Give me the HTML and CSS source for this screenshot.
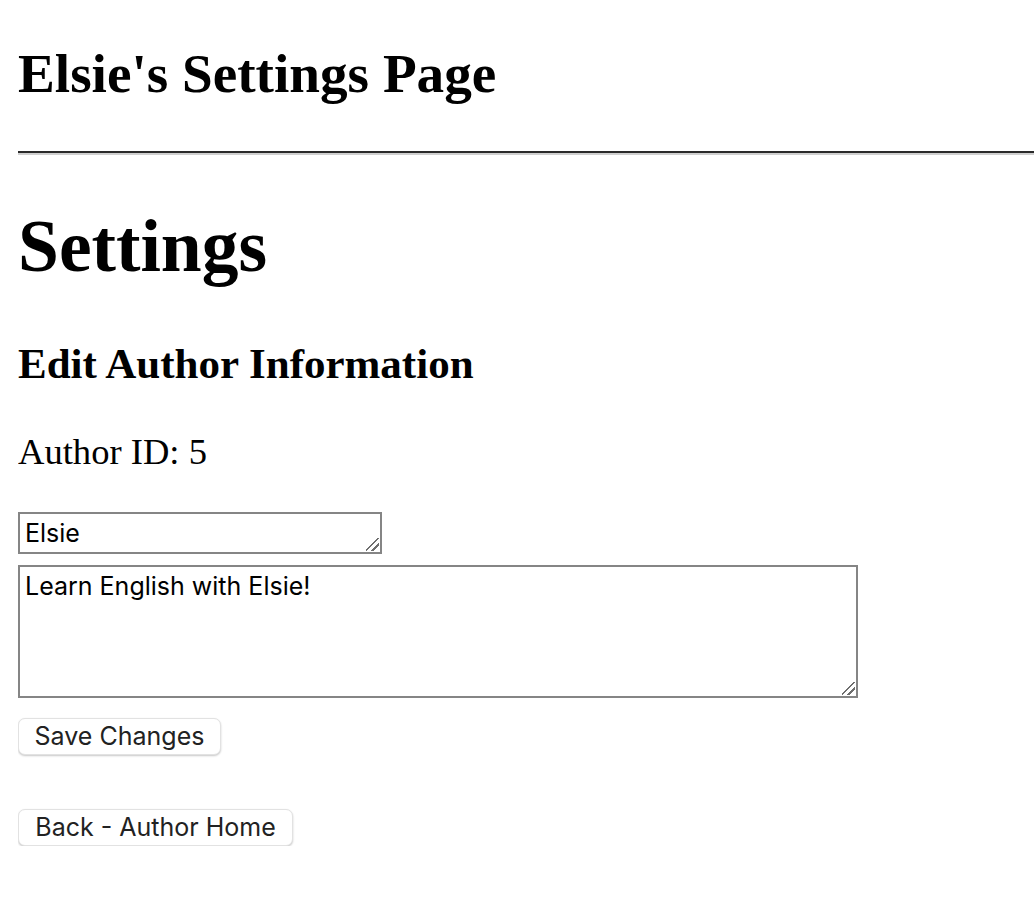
FILE: index.html
```html
<!DOCTYPE html>
<html>
<head>
<meta charset="utf-8">
<title>Settings</title>
<link rel="stylesheet" href="styles.css">
</head>
<body>
<h2 class="site-title">Elsie's Settings Page</h2>
<hr class="rule">
<h1 class="page-title">Settings</h1>
<h3 class="section-title">Edit Author Information</h3>
<p class="author-id">Author ID: 5</p>
<form class="edit-form">
  <textarea class="field field-name">Elsie</textarea>
  <textarea class="field field-bio">Learn English with Elsie!</textarea>
  <button type="button" class="btn btn-save">Save Changes</button>
</form>
<button type="button" class="btn btn-back">Back - Author Home</button>
</body>
</html>
```

FILE: styles.css
```css
html, body {
  background: #ffffff;
}
body {
  margin: 0 0 0 18px;
  padding: 0;
  font-family: "Liberation Serif", "Times New Roman", serif;
  font-size: 36.6px;
  line-height: 1.15;
  color: #000;
  overflow-x: hidden;
}
.site-title {
  font-size: 55.2px;
  font-weight: bold;
  line-height: 1.15;
  margin: 42px 0 46px;
}
.rule {
  margin: 0 0 50px;
  width: calc(100% + 18px);
  height: 0;
  border: 0;
  border-top: 2px solid #2a2a2a;
  border-bottom: 2px solid #cfcfcf;
}
.page-title {
  font-size: 73.5px;
  font-weight: bold;
  line-height: 1.15;
  margin: 0 0 49px;
}
.section-title {
  font-size: 43px;
  font-weight: bold;
  line-height: 1.15;
  margin: 0 0 43px;
}
.author-id {
  margin: 0 0 38px;
}
.edit-form {
  margin: 0;
}
.field {
  display: block;
  box-sizing: border-box;
  margin: 0 0 11px;
  padding: 4px 5px;
  border: 2px solid #858585;
  border-radius: 0;
  font-family: "Inter", "Noto Sans", sans-serif;
  font-size: 25px;
  line-height: 1.2;
  color: #000;
  resize: none;
  outline: none;
  background-color: #fff;
  background-image: linear-gradient(135deg, transparent 0 44%, #6e6e6e 44% 53%, transparent 53% 69%, #6e6e6e 69% 78%, transparent 78%);
  background-repeat: no-repeat;
  background-size: 13px 13px;
  background-position: right 1px bottom 1px;
}
.field-name {
  width: 364px;
  height: 42px;
}
.field-bio {
  width: 840px;
  height: 133px;
  margin-bottom: 20px;
}
.btn {
  display: block;
  box-sizing: border-box;
  height: 37px;
  padding: 0;
  margin: 0;
  border: 1px solid #e2e2e2;
  border-radius: 7px;
  background: #ffffff;
  box-shadow: 0 1px 2px rgba(0, 0, 0, 0.22);
  font-family: "Inter", "Noto Sans", sans-serif;
  font-size: 25px;
  color: #222;
  line-height: 1;
  text-align: center;
}
.btn-save {
  width: 203px;
}
.btn-back {
  width: 275px;
  margin-top: 54px;
}
```
